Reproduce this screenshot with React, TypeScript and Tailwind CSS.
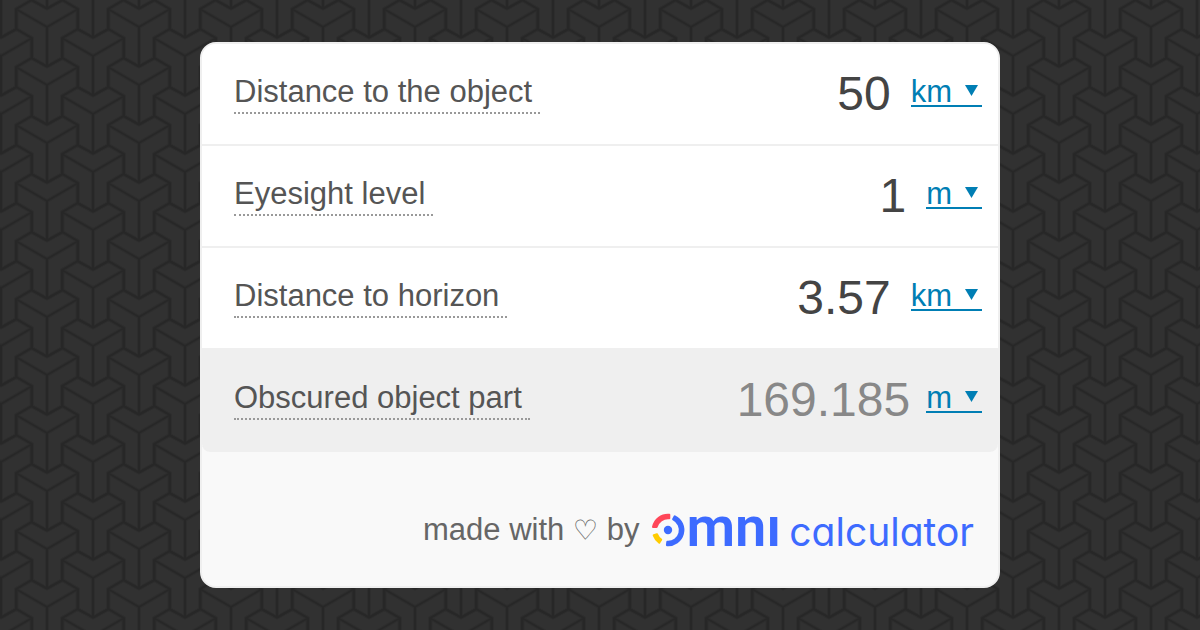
import React, { useState } from "react";
import clsx from "clsx";

type Field = {
  id: string;
  label: string;
  value: string;
  unit: string;
  units: string[];
  result?: boolean;
};

const fields: Field[] = [
  { id: "distance", label: "Distance to the object", value: "50", unit: "km", units: ["km", "m"] },
  { id: "eyesight", label: "Eyesight level", value: "1", unit: "m", units: ["km", "m"] },
  { id: "horizon", label: "Distance to horizon", value: "3.57", unit: "km", units: ["km", "m"] },
  { id: "obscured", label: "Obscured object part", value: "169.185", unit: "m", units: ["km", "m"], result: true },
];

// one block of the woven background: outline plus the inner Y
const BLOCK =
  "M0 0L-31 -18L-15.5 -27L0 -18.5L15.5 -27L31 -18ZM-31 -18V2L-15.5 11V31L0 39.5L15.5 31V11L31 2V-18M0 0V39.5";

const blocks = [
  [1, -60],
  [93, -60],
  [47, -31],
  [1, -2],
  [93, -2],
  [47, 27],
  [1, 56],
  [93, 56],
  [47, 85],
];

const Backdrop = () => (
  <svg className="absolute inset-0 w-full h-full" aria-hidden="true">
    <defs>
      <pattern id="weave" width="92" height="58" patternUnits="userSpaceOnUse">
        <rect width="92" height="58" fill="#313131" />
        {blocks.map(([x, y]) => (
          <path
            key={`${x}-${y}`}
            d={BLOCK}
            transform={`translate(${x} ${y})`}
            fill="none"
            stroke="#2d2d2d"
            strokeWidth="4"
            strokeLinejoin="round"
          />
        ))}
        {blocks.map(([x, y]) => (
          <path
            key={`${x}-${y}`}
            d={BLOCK}
            transform={`translate(${x} ${y})`}
            fill="none"
            stroke="#272727"
            strokeWidth="2"
            strokeLinejoin="round"
          />
        ))}
      </pattern>
    </defs>
    <rect width="100%" height="100%" fill="url(#weave)" />
  </svg>
);

const Row = ({ field }: { field: Field }) => {
  const [value, setValue] = useState(field.value);
  const [unit, setUnit] = useState(field.unit);

  return (
    <div
      className={clsx(
        "flex items-center h-[102px] pl-8 pr-4 border-b-2 border-[#efefef]",
        field.result && "bg-[#efefef] rounded-b-lg"
      )}
    >
      <label
        htmlFor={field.id}
        className="shrink-0 pr-2 pb-[2px] text-[31px] leading-[36px] text-[#555] border-b-2 border-dotted border-[#999]"
      >
        {field.label}
      </label>
      <input
        id={field.id}
        value={value}
        onChange={(e) => setValue(e.target.value)}
        className={clsx(
          "flex-1 min-w-0 mr-4 text-right text-[48px] leading-[56px] bg-transparent outline-none",
          field.result ? "text-[#888]" : "pr-1 text-[#444]"
        )}
      />
      <div className="relative h-[30px] mb-1 text-[#007eb4] border-b-2 border-[#007eb4]">
        <select
          aria-label={field.label}
          value={unit}
          onChange={(e) => setUnit(e.target.value)}
          className="block appearance-none field-sizing-content pr-[30px] text-[31px] leading-[30px] bg-transparent outline-none"
        >
          {field.units.map((u) => (
            <option key={u}>{u}</option>
          ))}
        </select>
        <svg
          viewBox="0 0 13 11"
          className="absolute right-1 top-2 w-[13px] h-[11px] pointer-events-none"
          fill="currentColor"
        >
          <path d="M0 0H13L6.5 11Z" />
        </svg>
      </div>
    </div>
  );
};

const Logo = () => (
  <a href="#" className="flex items-baseline text-[#3d6bff]">
    <svg
      viewBox="-17 -16 34 32"
      className="w-[34px] h-8 mr-px overflow-visible"
      strokeWidth="2.2"
      strokeLinejoin="round"
    >
      <path
        d="M-14.9 -3A15.2 15.2 0 0 1 1.2 -15.15V-11.8A11.9 11.9 0 0 0 -11.5 -3Z"
        fill="#ff4759"
        stroke="#ff4759"
      />
      <path
        d="M6.8 -13.6A15.2 15.2 0 0 1 -1 15.2L-0.6 11.9A11.9 11.9 0 0 0 5.2 -10.7Z"
        fill="currentColor"
        stroke="currentColor"
      />
      <path
        d="M-14.2 5.3A15.2 15.2 0 0 0 -8.7 12.5L-6.9 9.7A11.9 11.9 0 0 1 -11 4.4Z"
        fill="#ffcc00"
        stroke="#ffcc00"
      />
      <circle r="4.2" fill="currentColor" />
    </svg>
    <span className="font-['Roboto',sans-serif] font-semibold text-[56px] leading-[40px]">mnı</span>
    <span className="ml-2 font-['Inter',sans-serif] text-[39px] leading-[40px] [font-feature-settings:'cv11']">
      calculator
    </span>
  </a>
);

const App = () => {
  return (
    <main className="relative flex items-center justify-center min-h-screen bg-[#303030] font-['Liberation_Sans',Arial,sans-serif]">
      <Backdrop />
      <div className="relative w-full max-w-[800px] rounded-2xl border-2 border-[#efefef] bg-[#f9f9f9] overflow-hidden">
        <div className="rounded-b-lg bg-white">
          {fields.map((field) => (
            <Row key={field.id} field={field} />
          ))}
        </div>
        <div className="flex items-center justify-end gap-3 pt-[55px] pb-[34px] pr-6">
          <p className="text-[31px] leading-[40px] text-[#666]">
            made with <span className="font-['DejaVu_Sans',sans-serif] text-[28px] leading-none">♡</span> by
          </p>
          <Logo />
        </div>
      </div>
    </main>
  );
};

export default App;
